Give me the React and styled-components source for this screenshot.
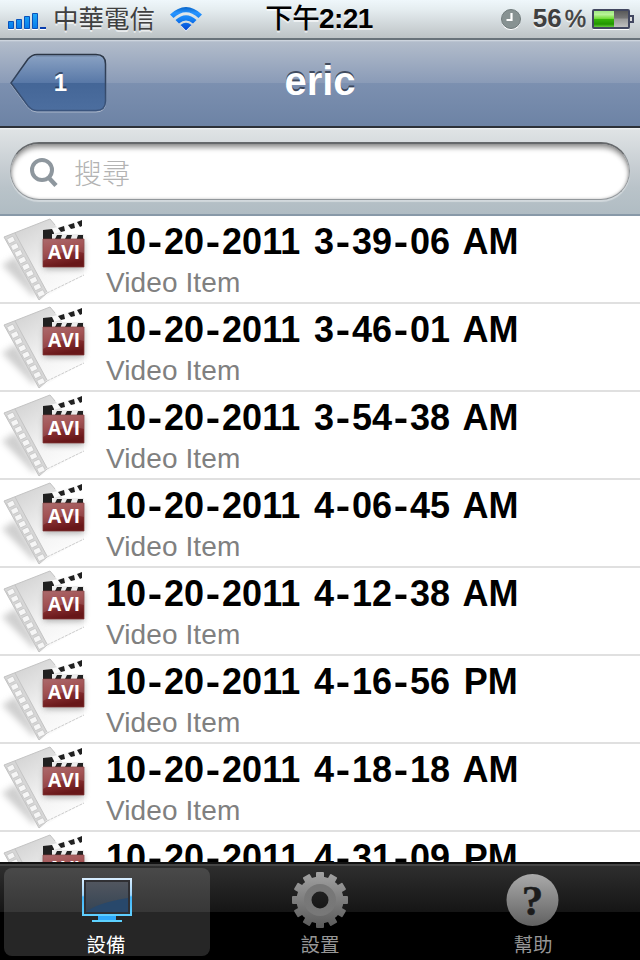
import { Fragment } from 'react';
import styled, { createGlobalStyle } from 'styled-components';

const GlobalStyle = createGlobalStyle`
  * {
    box-sizing: border-box;
  }

  body {
    margin: 0;
    background: #000;
    font-family: 'Liberation Sans', 'Noto Sans CJK TC', sans-serif;
  }

  svg {
    display: block;
    overflow: visible;
  }
`;

const Screen = styled.div`
  display: flex;
  flex-direction: column;
  width: 640px;
  height: 960px;
  overflow: hidden;
  background: #fff;
`;

const StatusBar = styled.header`
  display: grid;
  grid-template-columns: 1fr auto 1fr;
  align-items: center;
  flex: none;
  height: 40px;
  padding: 0 6px 2px 8px;
  background: linear-gradient(#eff7fb 0%, #e5edf0 25%, #bdc3c5 100%);
  border-bottom: 2px solid #69737a;
  color: #404040;
  text-shadow: 0 2px 0 rgba(255, 255, 255, 0.65);
`;

const StatusGroup = styled.div`
  display: flex;
  align-items: center;
  justify-content: ${(props) => props.$align || 'flex-start'};
`;

const Carrier = styled.span`
  margin: 0 15px 0 7px;
  font-size: 25.5px;
  line-height: 36px;
  white-space: nowrap;
`;

const Clock = styled.div`
  margin-right: 4px;
  color: #000;
  font-size: 28px;
  font-weight: 700;
  line-height: 36px;
  letter-spacing: -0.6px;
  white-space: nowrap;

  & span {
    font-size: 27.5px;
    font-weight: 500;
  }
`;

const Percent = styled.span`
  margin: 0 6px 0 12px;
  font-size: 26px;
  font-weight: 700;
  line-height: 36px;

  & span {
    margin-left: 3px;
    font-size: 24px;
    font-weight: 400;
    -webkit-text-stroke: 0.5px #404040;
  }
`;

const NavBar = styled.nav`
  display: grid;
  grid-template-columns: 96px 1fr 96px;
  align-items: center;
  flex: none;
  height: 88px;
  padding: 0 10px;
  background: linear-gradient(
    #d6dce4 0,
    #b2bccb 2px,
    #8a9bb7 50%,
    #7c90b0 50%,
    #6d83a5 100%
  );
  border-bottom: 2px solid #2d3138;
`;

const BackButton = styled.button`
  position: relative;
  width: 96px;
  height: 60px;
  padding: 0 0 1px 5px;
  border: 0;
  background: none;
  color: #fff;
  font: 700 24px 'Liberation Sans', sans-serif;
  text-shadow: 0 -2px 0 rgba(30, 45, 70, 0.65);

  & svg {
    position: absolute;
    inset: 0;
  }

  & span {
    position: relative;
  }
`;

const Title = styled.h1`
  margin: 0;
  padding-bottom: 5px;
  color: #fff;
  font-size: 40px;
  line-height: 46px;
  text-align: center;
  text-shadow: 0 -2px 0 rgba(50, 60, 78, 0.85);
`;

const SearchBar = styled.div`
  flex: none;
  height: 88px;
  padding: 14px 10px 0;
  background: linear-gradient(
    #f3f5f6 0,
    #dfe3e5 2px,
    #c4cbd0 50%,
    #b9c3c9 70%,
    #b0bcc3 100%
  );
  border-bottom: 2px solid #8899a8;
`;

const SearchField = styled.label`
  display: flex;
  align-items: center;
  gap: 16px;
  height: 58px;
  padding: 2px 20px 0 19px;
  background: #fff;
  border: 1px solid #92979b;
  border-top: 2px solid #65686b;
  border-radius: 29px;
  box-shadow:
    inset 0 4px 5px rgba(0, 0, 0, 0.38),
    inset 0 0 3px rgba(0, 0, 0, 0.25),
    0 2px 1px rgba(255, 255, 255, 0.4);
`;

const Placeholder = styled.span`
  padding-top: 4px;
  color: #b3b3b3;
  font-size: 28px;
  font-weight: 300;
  line-height: 40px;
`;

const List = styled.ul`
  flex: 1;
  min-height: 0;
  margin: 0;
  padding: 0;
  overflow: hidden;
  list-style: none;
`;

const Row = styled.li`
  display: flex;
  gap: 20px;
  height: 88px;
  border-bottom: 2px solid #e0e0e0;
`;

const RowText = styled.div`
  display: flex;
  flex-direction: column;
  padding-top: 5px;
  white-space: nowrap;
`;

const RowTitle = styled.strong`
  color: #000;
  font-size: 36px;
  line-height: 42px;
  word-spacing: 3.7px;
`;

const Dash = styled.span`
  display: inline-block;
  margin: 0 3px;
  transform: scaleX(1.2);
`;

const RowSubtitle = styled.span`
  color: #808080;
  font-size: 28px;
  line-height: 40px;
  letter-spacing: 0.1px;
`;

const TabBar = styled.footer`
  display: grid;
  grid-template-columns: 206px 206px 206px;
  column-gap: 7px;
  flex: none;
  height: 98px;
  padding: 4px 4px 4px;
  border-top: 2px solid #111;
  background: linear-gradient(
    #454545 0,
    #454545 2px,
    #2e2e2e 2px,
    #151515 48px,
    #000 48px
  );
`;

const Tab = styled.div`
  display: flex;
  flex-direction: column;
  align-items: center;
  height: 88px;
  padding-right: ${(props) => (props.$active ? '2px' : '0')};
  border-radius: 8px;
  background: ${(props) =>
    props.$active
      ? 'linear-gradient(#494949 0, #373737 44px, #262626 44px)'
      : 'none'};
  color: ${(props) => (props.$active ? '#fff' : '#969696')};
  font-size: 19.5px;
  line-height: 30px;

  & svg {
    flex: none;
    height: 62px;
    width: 70px;
  }
`;

function SignalIcon() {
  return (
    <svg width="38" height="18" viewBox="0 0 38 18">
      <defs>
        <linearGradient id="signal" x2="0" y2="1">
          <stop stopColor="#20a9f8" />
          <stop offset="1" stopColor="#067bea" />
        </linearGradient>
      </defs>
      <g transform="translate(0 2)">
        <path d="M0 17.500h6m2 0h6m2 0h6m2 0h6m2 0h6" stroke="#fff" />
        <g fill="url(#signal)" stroke="#0a52bb">
          <path d="M.5 9.500h5v7h-5zM8.500 7.500h5v9h-5zM16.500 4.500h5v12h-5zM24.500 1.500h5v15h-5z" />
        </g>
        <path d="M32 15h6v2h-6z" fill="#0a3fae" />
      </g>
    </svg>
  );
}

function WifiIcon() {
  return (
    <svg width="32" height="24" viewBox="0 0 32 24">
      <defs>
        <linearGradient id="wifi" x2="0" y2="24" gradientUnits="userSpaceOnUse">
          <stop stopColor="#0864c8" />
          <stop offset=".25" stopColor="#2794ff" />
          <stop offset=".5" stopColor="#1482f4" />
          <stop offset="1" stopColor="#003fce" />
        </linearGradient>
      </defs>
      <path d="M11 19Q16 15 21 19L16 24.500Z" fill="#fff" />
      <g fill="url(#wifi)">
        <path d="M0 7.500Q16-7.500 32 7.500L28.500 11Q16-.5 3.500 11Z" />
        <path d="M5.500 13Q16 3.500 26.500 13L23 16.500Q16 10.500 9 16.500Z" />
        <path d="M10.500 18Q16 13.500 21.500 18L16 23.500Z" />
      </g>
    </svg>
  );
}

function AlarmIcon() {
  return (
    <svg width="20" height="20" viewBox="0 0 20 20">
      <circle cx="10" cy="11.500" r="9.500" fill="#fff" />
      <circle cx="10" cy="10" r="9.500" fill="#879292" stroke="#707b7c" />
      <path d="M10.500 4v7H5.500" fill="none" stroke="#fff" strokeWidth="2.200" />
    </svg>
  );
}

function BatteryIcon() {
  return (
    <svg width="42" height="20" viewBox="0 0 42 20">
      <defs>
        <linearGradient id="charge" x2="0" y2="1">
          <stop stopColor="#9ee981" />
          <stop offset=".22" stopColor="#b9f398" />
          <stop offset=".48" stopColor="#71db35" />
          <stop offset=".52" stopColor="#35b509" />
          <stop offset=".82" stopColor="#219400" />
          <stop offset="1" stopColor="#65cb3c" />
        </linearGradient>
        <linearGradient id="empty" x2="0" y2="1">
          <stop stopColor="#555" />
          <stop offset=".45" stopColor="#777" />
          <stop offset=".5" stopColor="#999" />
          <stop offset="1" stopColor="#c4c4c4" />
        </linearGradient>
      </defs>
      <path d="M1 20.500h36" stroke="#fff" />
      <rect x="1" y="1" width="36" height="18" rx="1" fill="url(#empty)" stroke="#424760" strokeWidth="2" />
      <path d="M2 2h20v16H2z" fill="url(#charge)" />
      <path d="M38 7h3v6h-3" fill="#ddd" stroke="#424760" strokeWidth="2" />
    </svg>
  );
}

function BackShape() {
  const outline =
    'M27 1.500H86Q95.500 1.500 95.500 11V48Q95.500 57.500 86 57.500H27Q22 57.500 18 53L1 30 18 6Q22 1.500 27 1.500Z';

  return (
    <svg width="96" height="60" viewBox="0 0 96 60">
      <defs>
        <linearGradient id="back" x2="0" y2="1">
          <stop stopColor="#8ba3c4" />
          <stop offset=".51" stopColor="#5878a7" />
          <stop offset=".51" stopColor="#446697" />
          <stop offset="1" stopColor="#4c6e9f" />
        </linearGradient>
        <linearGradient id="backEdge" x2="0" y2="1">
          <stop stopColor="#2c3645" />
          <stop offset="1" stopColor="#3b557e" />
        </linearGradient>
      </defs>
      <path d={outline} fill="none" stroke="#aab6c9" transform="translate(0 1.500)" />
      <path d={outline} fill="url(#back)" stroke="url(#backEdge)" strokeWidth="1.500" />
      <path d="M26 3H87" stroke="#536781" opacity=".5" />
    </svg>
  );
}

function SearchIcon() {
  return (
    <svg width="28" height="30" viewBox="0 0 28 30" fill="none" stroke="#8e979e">
      <circle cx="12" cy="12" r="10" strokeWidth="4" />
      <path d="M18.500 19.500L26 27.500" strokeWidth="4.500" />
    </svg>
  );
}

function VideoIcon() {
  const holes = Array.from({ length: 9 }, (_, i) => i);

  return (
    <svg width="86" height="86" viewBox="0 0 86 86">
      <defs>
        <linearGradient id="film" x1=".2" y1="0" x2=".8" y2="1">
          <stop stopColor="#cfcfcf" />
          <stop offset=".55" stopColor="#f2f2f2" />
          <stop offset="1" stopColor="#fff" />
        </linearGradient>
        <linearGradient id="board" x2=".3" y2="1">
          <stop stopColor="#9f5658" />
          <stop offset=".45" stopColor="#963b3d" />
          <stop offset="1" stopColor="#681719" />
        </linearGradient>
        <filter id="soft" x="-30%" y="-30%" width="160%" height="160%">
          <feGaussianBlur stdDeviation="3" />
        </filter>
      </defs>
      <path d="M2 49L16 40 38 78 33 80Z" fill="#bbb" opacity=".7" filter="url(#soft)" />
      <path d="M4 21L50 3 56 10 84 44V59L40 84Z" fill="url(#film)" />
      <path d="M4 21L15 17 47 76 39 84Z" fill="#d6d6d6" />
      <path d="M4 21L50 3 55 9M4 21L39 84 47 77M15 17L47 76" fill="none" stroke="#c4c4c4" />
      <path d="M47 77L84 59" stroke="#ccc" strokeDasharray="3 1" />
      {holes.map((i) => (
        <rect
          key={i}
          x="-3.500"
          y="-2.700"
          width="7"
          height="5.400"
          rx="1"
          fill="#f6f6f6"
          stroke="#bdbdbd"
          strokeWidth=".6"
          transform={`translate(${11 + i * 3.75} ${24 + i * 6.700}) rotate(-26)`}
        />
      ))}
      <path d="M44 24H84V53H44Z" fill="#777" opacity=".6" filter="url(#soft)" />
      <path d="M43 15L82 4V10L53 18V24H43Z" fill="#fafafa" />
      <path d="M43 14L52 13 54 17 53 25H43ZM58 12L64 10 65 15 61 16ZM68 9L74 7 75 12 71 13ZM77 6L82 4V10L80 11Z" fill="#202020" />
      <path d="M52 18H84V25H52Z" fill="#ededed" />
      <path d="M57 19h5l-2 6h-6zM67 19h5l-2 6h-6zM78 19h5v6h-7z" fill="#222" />
      <path d="M43 23H84V51H43Z" fill="url(#board)" stroke="#813638" strokeWidth=".7" />
      <path d="M43 23L84 23V37Q64 32 43 45Z" fill="#fff" opacity=".12" />
      <text
        x="64"
        y="42.500"
        fill="#fff"
        fontFamily="Open Sans, sans-serif"
        fontSize="19"
        fontWeight="700"
        textAnchor="middle"
        textLength="32"
        lengthAdjust="spacingAndGlyphs"
      >
        AVI
      </text>
    </svg>
  );
}

function MonitorIcon() {
  return (
    <svg viewBox="0 0 70 62">
      <defs>
        <linearGradient id="monitor" x2="0" y2="1">
          <stop stopColor="#d7edff" />
          <stop offset=".45" stopColor="#9bd4fb" />
          <stop offset=".5" stopColor="#43b5fa" />
          <stop offset="1" stopColor="#5fcfff" />
        </linearGradient>
        <linearGradient id="glass" x2="0" y2="1">
          <stop stopColor="#51565f" />
          <stop offset="1" stopColor="#354454" />
        </linearGradient>
      </defs>
      <g transform="translate(-1 0)">
        <path d="M13 11H61V47H13Z" fill="#303034" stroke="url(#monitor)" strokeWidth="2" />
        <path d="M16 14H58V44H16Z" fill="url(#glass)" />
        <path d="M16 44Q27 35 58 30V44Z" fill="#28486b" />
        <path d="M28 48H46V52H28Z" fill="#2fa9fa" />
        <path d="M22 52H52V54H22Z" fill="#5ed2ff" />
      </g>
    </svg>
  );
}

function GearIcon() {
  const teeth = Array.from({ length: 12 }, (_, i) => i * 30);

  return (
    <svg viewBox="0 0 70 62">
      <defs>
        <linearGradient id="gear" y1="4" x2="0" y2="60" gradientUnits="userSpaceOnUse">
          <stop stopColor="#a2a2a2" />
          <stop offset="1" stopColor="#5a5a5a" />
        </linearGradient>
        <linearGradient id="gearRing" x2="0" y2="1">
          <stop stopColor="#777" />
          <stop offset="1" stopColor="#787878" />
        </linearGradient>
        <mask id="gearMask">
          <g fill="#fff">
            <circle cx="35" cy="32" r="23.500" />
            {teeth.map((angle) => (
              <rect
                key={angle}
                x="31"
                y="4"
                width="8"
                height="10"
                rx="1"
                transform={`rotate(${angle} 35 32)`}
              />
            ))}
          </g>
          <circle cx="35" cy="32" r="8.500" fill="#000" />
        </mask>
      </defs>
      <g mask="url(#gearMask)">
        <path d="M5 2H65V62H5Z" fill="url(#gear)" />
        <circle cx="35" cy="32" r="16" fill="url(#gearRing)" />
      </g>
    </svg>
  );
}

function HelpIcon() {
  return (
    <svg viewBox="0 0 70 62">
      <defs>
        <linearGradient id="help" x2="0" y2="1">
          <stop stopColor="#aaa" />
          <stop offset="1" stopColor="#616161" />
        </linearGradient>
      </defs>
      <circle cx="34.500" cy="32" r="26" fill="url(#help)" />
      <text
        x="34.500"
        y="47"
        fill="#1c1c1c"
        stroke="#1c1c1c"
        strokeWidth=".5"
        fontFamily="Liberation Serif, serif"
        fontSize="43"
        fontWeight="700"
        textAnchor="middle"
      >
        ?
      </text>
    </svg>
  );
}

const videos = [
  '10-20-2011 3-39-06 AM',
  '10-20-2011 3-46-01 AM',
  '10-20-2011 3-54-38 AM',
  '10-20-2011 4-06-45 AM',
  '10-20-2011 4-12-38 AM',
  '10-20-2011 4-16-56 PM',
  '10-20-2011 4-18-18 AM',
  '10-20-2011 4-31-09 PM',
];

function VideoRow({ name }) {
  return (
    <Row>
      <VideoIcon />
      <RowText>
        <RowTitle>
          {name.split('-').map((part, i) => (
            <Fragment key={i}>
              {i > 0 && <Dash>-</Dash>}
              {part}
            </Fragment>
          ))}
        </RowTitle>
        <RowSubtitle>Video Item</RowSubtitle>
      </RowText>
    </Row>
  );
}

function App() {
  return (
    <>
      <GlobalStyle />
      <Screen>
        <StatusBar>
          <StatusGroup>
            <SignalIcon />
            <Carrier>中華電信</Carrier>
            <WifiIcon />
          </StatusGroup>
          <Clock>
            <span>下午</span>2:21
          </Clock>
          <StatusGroup $align="flex-end">
            <AlarmIcon />
            <Percent>
              56<span>%</span>
            </Percent>
            <BatteryIcon />
          </StatusGroup>
        </StatusBar>
        <NavBar>
          <BackButton>
            <BackShape />
            <span>1</span>
          </BackButton>
          <Title>eric</Title>
        </NavBar>
        <SearchBar>
          <SearchField>
            <SearchIcon />
            <Placeholder>搜尋</Placeholder>
          </SearchField>
        </SearchBar>
        <List>
          {videos.map((name) => (
            <VideoRow key={name} name={name} />
          ))}
        </List>
        <TabBar>
          <Tab $active>
            <MonitorIcon />
            設備
          </Tab>
          <Tab>
            <GearIcon />
            設置
          </Tab>
          <Tab>
            <HelpIcon />
            幫助
          </Tab>
        </TabBar>
      </Screen>
    </>
  );
}

export default App;
